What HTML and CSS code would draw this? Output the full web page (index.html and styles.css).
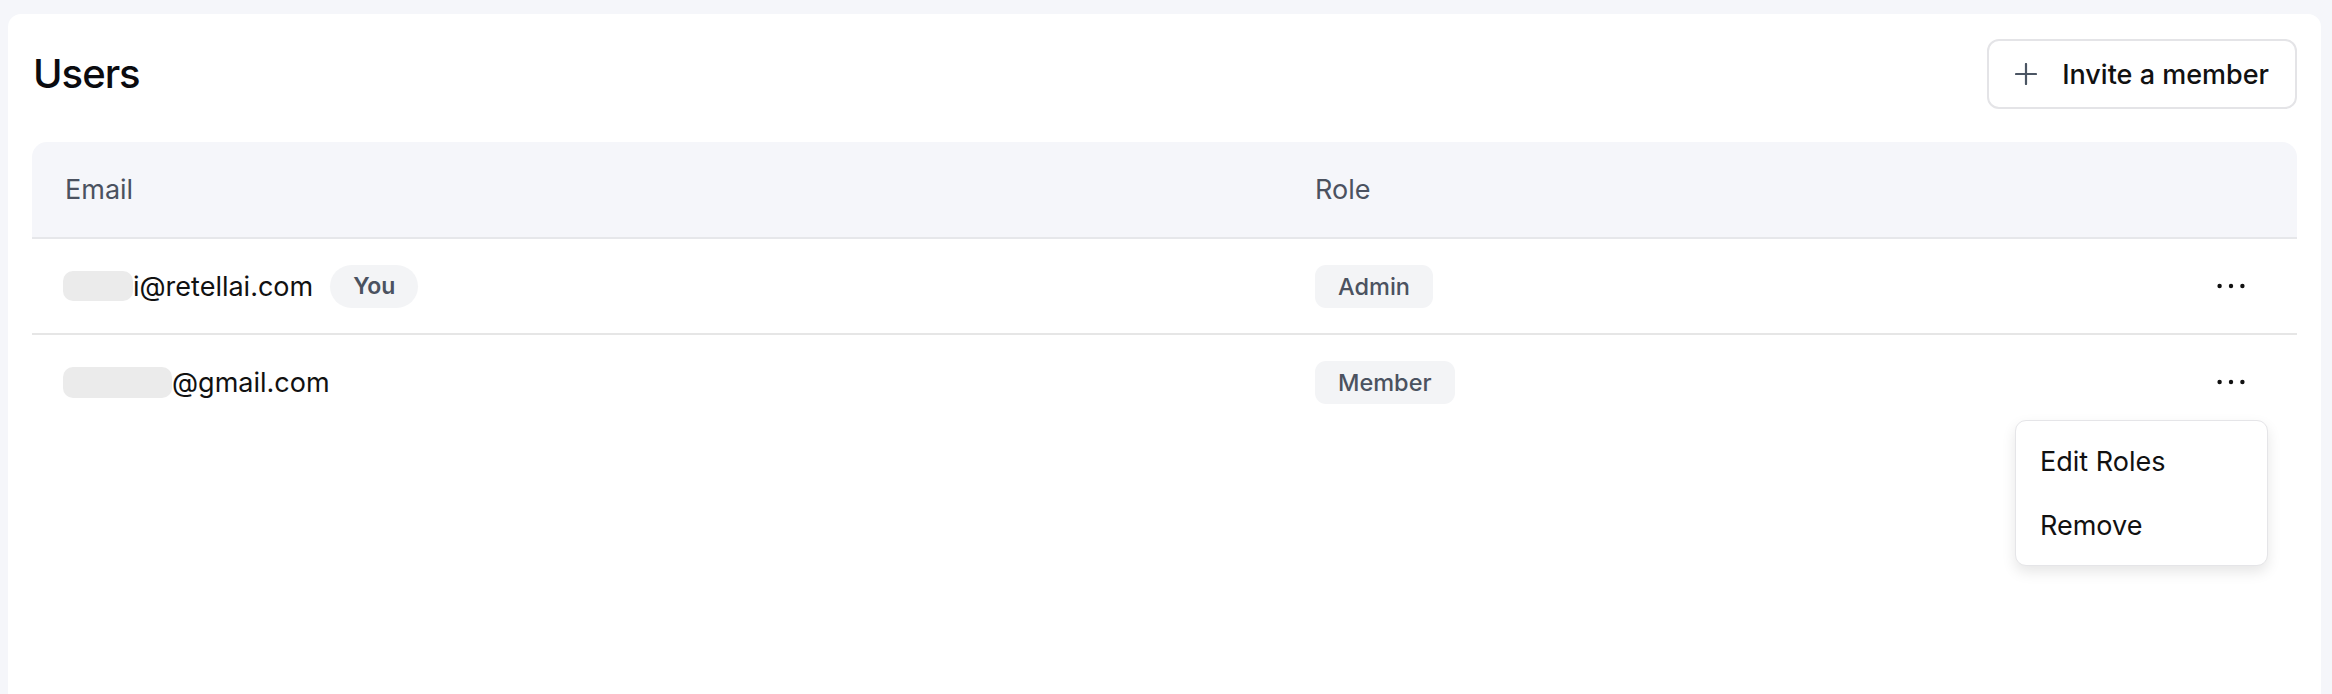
FILE: index.html
```html
<!DOCTYPE html>
<html lang="en">
<head>
<meta charset="utf-8">
<title>Users</title>
<link rel="stylesheet" href="styles.css">
</head>
<body>
<main class="page">
  <section class="card">
    <header class="card-head">
      <h1 class="title">Users</h1>
      <button class="invite" type="button">
        <svg class="plus" width="22" height="22" viewBox="0 0 22 22" aria-hidden="true"><path d="M11 1v20M1 11h20" fill="none" stroke="#4b5563" stroke-width="2.2" stroke-linecap="round"/></svg>
        <span>Invite a member</span>
      </button>
    </header>
    <div class="table">
      <div class="row thead">
        <div class="cell th">Email</div>
        <div class="cell th">Role</div>
        <div class="cell th"></div>
      </div>
      <div class="row trow divided">
        <div class="cell email"><span class="redact redact-short"></span><span class="addr">i@retellai.com</span><span class="you">You</span></div>
        <div class="cell"><span class="role">Admin</span></div>
        <div class="cell actions">
          <button class="dots" type="button" aria-label="More"><svg width="28" height="6" viewBox="0 0 28 6" aria-hidden="true"><circle cx="2.6" cy="3" r="2.2" fill="#111"/><circle cx="14" cy="3" r="2.2" fill="#111"/><circle cx="25.4" cy="3" r="2.2" fill="#111"/></svg></button>
        </div>
      </div>
      <div class="row trow">
        <div class="cell email"><span class="redact redact-long"></span><span class="addr">@gmail.com</span></div>
        <div class="cell"><span class="role">Member</span></div>
        <div class="cell actions">
          <button class="dots" type="button" aria-label="More"><svg width="28" height="6" viewBox="0 0 28 6" aria-hidden="true"><circle cx="2.6" cy="3" r="2.2" fill="#111"/><circle cx="14" cy="3" r="2.2" fill="#111"/><circle cx="25.4" cy="3" r="2.2" fill="#111"/></svg></button>
          <div class="menu" role="menu">
            <div class="menu-item" role="menuitem">Edit Roles</div>
            <div class="menu-item" role="menuitem">Remove</div>
          </div>
        </div>
      </div>
    </div>
  </section>
</main>
</body>
</html>
```

FILE: styles.css
```css
* { box-sizing: border-box; }

html, body {
  margin: 0;
  padding: 0;
  height: 100%;
  overflow: hidden;
  background: #f5f6fa;
  font-family: Inter, "Noto Sans", "Liberation Sans", sans-serif;
  color: #111111;
}

.page {
  height: 100%;
  padding: 14px 11px 0 8px;
}

.card {
  background: #ffffff;
  border-radius: 13px 13px 0 0;
  height: 100%;
  padding: 25px 24px 0 24px;
}

.card-head {
  display: flex;
  align-items: center;
  justify-content: space-between;
  height: 70px;
}

.title {
  margin: 0;
  padding-left: 1px;
  font-size: 40px;
  font-weight: 500;
  letter-spacing: -0.025em;
  line-height: 1;
  color: #0b0b0f;
}

.invite {
  display: flex;
  align-items: center;
  gap: 25px;
  height: 70px;
  padding: 0 26px;
  background: #ffffff;
  border: 2px solid #e4e4e7;
  border-radius: 12px;
  font-family: inherit;
  font-size: 27px;
  font-weight: 500;
  color: #111111;
  cursor: pointer;
}

.plus { display: block; flex: none; }

.table {
  margin-top: 33px;
}

.row {
  display: grid;
  grid-template-columns: 1250px 1fr 120px;
  align-items: center;
}

.thead {
  height: 97px;
  background: #f5f6fa;
  border-bottom: 2px solid #e6e7ea;
  border-radius: 15px 15px 0 0;
}

.cell {
  padding-left: 33px;
  display: flex;
  align-items: center;
  height: 100%;
}

.th {
  font-size: 27px;
  font-weight: 400;
  color: #4b5260;
}

.trow {
  height: 94px;
}

.divided {
  height: 96px;
  border-bottom: 2px solid #e6e6e6;
}

.email {
  font-size: 27px;
  color: #111111;
}

.redact {
  display: inline-block;
  height: 30px;
  margin-left: -2px;
  background: #ebebeb;
  border-radius: 10px;
}

.redact-short { width: 70px; }
.redact-long { width: 109px; height: 31px; }

.you {
  display: inline-flex;
  align-items: center;
  height: 43px;
  margin-left: 17px;
  padding: 0 23px;
  border-radius: 22px;
  background: #f3f4f6;
  font-size: 23px;
  font-weight: 600;
  color: #4b5260;
}

.role {
  display: inline-flex;
  align-items: center;
  height: 43px;
  padding: 0 23px;
  border-radius: 11px;
  background: #f3f4f6;
  font-size: 23.5px;
  font-weight: 500;
  color: #4b5260;
}

.actions {
  position: relative;
  justify-content: flex-end;
  padding-right: 52px;
}

.dots {
  display: flex;
  align-items: center;
  padding: 0;
  border: 0;
  background: transparent;
  cursor: pointer;
}

.dots svg { display: block; }

.menu {
  position: absolute;
  top: 85px;
  right: 29px;
  width: 253px;
  padding: 8px 0;
  background: #ffffff;
  border: 1px solid #e5e5e8;
  border-radius: 11px;
  box-shadow: 0 6px 14px rgba(0, 0, 0, 0.10);
  z-index: 10;
}

.menu-item {
  height: 64px;
  display: flex;
  align-items: center;
  padding-left: 24px;
  font-size: 27px;
  color: #111111;
}
```
